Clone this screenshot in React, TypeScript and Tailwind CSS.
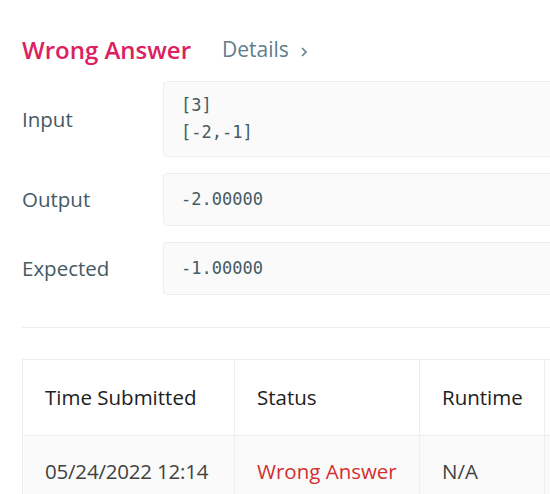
const ROWS = [
    { label: 'Input', lines: ['[3]', '[-2,-1]'], pad: 'py-[10px]' },
    { label: 'Output', lines: ['-2.00000'], pad: 'py-[12px]' },
    { label: 'Expected', lines: ['-1.00000'], pad: 'py-[12px]' },
];

function Chevron() {
    return (
        <svg width="10" height="12" viewBox="0 0 10 12" className="ml-[10px] mt-[3px]">
            <path d="M3 2 L7 6 L3 10" fill="none" stroke="#607d8b" strokeWidth="1.6" />
        </svg>
    );
}

export default function App() {
    return (
        <div className="w-[550px] h-[494px] overflow-hidden bg-white font-['Open_Sans',sans-serif]">
            <div className="w-[760px] pl-[22px] pt-[33px]">
                <div className="flex items-center h-[34px]">
                    <span className="text-[24px] font-semibold text-[#dd2060]">Wrong Answer</span>
                    <span className="ml-[31px] text-[21px] text-[#607d8b]">Details</span>
                    <Chevron />
                </div>

                <div className="mt-[14px] flex flex-col gap-4">
                    {ROWS.map(r => (
                        <div key={r.label} className="flex items-center">
                            <div className="w-[141px] text-[20.5px] text-[#455a64]">{r.label}</div>
                            <div
                                className={`flex-1 rounded-[4px] border border-[#eeeeee] bg-[#fafafa] px-[17px] ${r.pad} font-['DejaVu_Sans_Mono',monospace] text-[17px] leading-[27px] text-[#455a64]`}
                            >
                                {r.lines.map(l => (
                                    <div key={l}>{l}</div>
                                ))}
                            </div>
                        </div>
                    ))}
                </div>

                <div className="mt-[32px] border-t border-[#eeeeee]" />

                <table className="mt-[31px] table-fixed border-collapse whitespace-nowrap text-[20.5px]">
                    <colgroup>
                        <col className="w-[212px]" />
                        <col className="w-[185px]" />
                        <col className="w-[125px]" />
                        <col className="w-[150px]" />
                    </colgroup>
                    <thead>
                        <tr className="h-[76px]">
                            {['Time Submitted', 'Status', 'Runtime', ''].map((h, i) => (
                                <th
                                    key={i}
                                    className="border border-[#eeeeee] pl-[22px] pr-0 text-left font-normal text-[#212121]"
                                >
                                    {h}
                                </th>
                            ))}
                        </tr>
                    </thead>
                    <tbody>
                        <tr className="h-[72px] bg-[#fafafa] text-[#424242]">
                            <td className="border border-[#eeeeee] pl-[22px] pr-0 tracking-[-0.2px]">05/24/2022 12:14</td>
                            <td className="border border-[#eeeeee] pl-[22px] pr-0 text-[#d32f2f]">Wrong Answer</td>
                            <td className="border border-[#eeeeee] pl-[22px] pr-0">N/A</td>
                            <td className="border border-[#eeeeee] pl-[22px] pr-0" />
                        </tr>
                    </tbody>
                </table>
            </div>
        </div>
    );
}
